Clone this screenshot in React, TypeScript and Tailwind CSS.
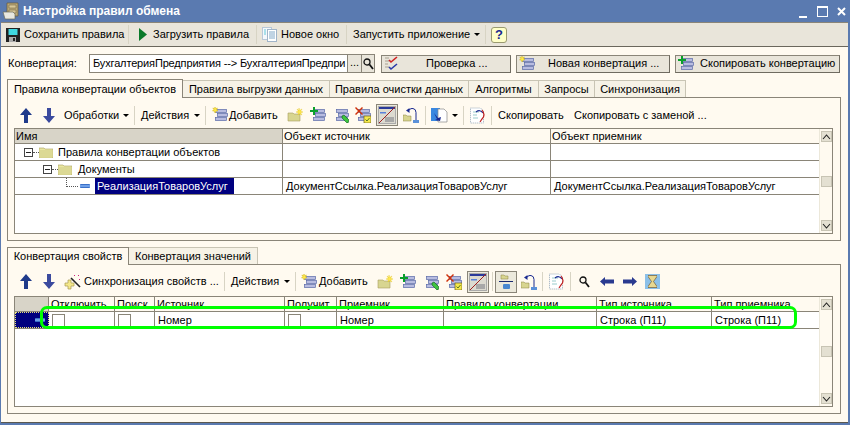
import React from "react";

const Stack = ({ children }: { children?: React.ReactNode }) => (
  <svg width="16" height="16" viewBox="0 0 16 16" className="block shrink-0">
    <rect x="3.500" y="2.500" width="11" height="3" fill="#b8bce0" stroke="#5a6aa8" strokeWidth="0.7" />
    <rect x="5.500" y="6.500" width="10" height="3" fill="#b8bce0" stroke="#5a6aa8" strokeWidth="0.7" />
    <rect x="3.500" y="10.500" width="11" height="3" fill="#b8bce0" stroke="#5a6aa8" strokeWidth="0.7" />
    {children}
  </svg>
);
const Star = () => <path d="M3 0l.8 1.600L5.500 1 4.700 2.600 6 4 4.200 4 3 6 2.200 4 .5 4l1.300-1.400L.8 1l1.500.6z" fill="#ffe94a" stroke="#c8a800" strokeWidth="0.4" />;
const Plus = () => <path d="M3 0h2v3h3v2H5v3H3V5H0V3h3z" fill="#0aa02a" />;
const Pencil = () => <path d="M9 9l2-1 5 5-1 3-1 0-5-5z" fill="#3ec43e" stroke="#0a5a20" strokeWidth="0.6" />;
const Cross = () => <path d="M0 1l1-1 3 3 3-3 1 1-3 3 3 3-1 1-3-3-3 3-1-1 3-3z" fill="#d0300a" />;
const Folder = () => (
  <svg width="14" height="11" viewBox="0 0 14 11" className="shrink-0">
    <path d="M0 1h5l1 1h8v9H0z" fill="#e8e6a0" stroke="#a8a060" strokeWidth="0.6" />
    <rect x="1" y="3" width="12" height="7.500" fill="#dcd994" />
  </svg>
);
const ArrowUp = () => (
  <svg width="12" height="15" viewBox="0 0 12 15" className="shrink-0"><path d="M6 0l6 7H8v8H4V7H0z" fill="#1f3a8a" /></svg>
);
const ArrowDown = () => (
  <svg width="12" height="15" viewBox="0 0 12 15" className="block shrink-0"><path d="M4 0h4v8h4l-6 7-6-7h4z" fill="#3b4a9e" /></svg>
);
const Caret = () => <span className="ml-[4px] h-0 w-0 shrink-0 border-x-[3px] border-t-[3px] border-x-transparent border-t-black" />;
const Sep = ({ c }: { c: string }) => <span className={`h-[19px] w-px shrink-0 bg-[#d8d4c4] ${c}`} />;
const FolderStar = () => (
  <svg width="16" height="16" viewBox="0 0 16 16" className="block shrink-0">
    <path d="M1 6h5l1 1 6 0v7H1z" fill="#d8d590" stroke="#a8a060" strokeWidth="0.6" />
    <path d="M12 1l.6 2.400L15 2l-1.400 2.300L16 5l-2.400.8L15 8l-2.400-1.200L11 8l.4-2.300L9 5l2.400-.7L10 2l1.700 1.300z" fill="#ffe94a" stroke="#d8b800" strokeWidth="0.3" />
  </svg>
);
const StackPlus = () => <Stack><Plus /></Stack>;
const StackStar = () => <Stack><Star /></Stack>;
const StackPencil = () => <Stack><Pencil /></Stack>;
const StackCross = () => (
  <Stack>
    <Cross />
    <rect x="9" y="9" width="7" height="7" fill="#f4e84a" stroke="#6a6020" strokeWidth="0.7" />
    <path d="M10.500 12.500l1.500 1.500 2.500-3" stroke="#4a6a20" fill="none" strokeWidth="0.9" />
  </Stack>
);
const Pressed = ({ c, children }: { c: string; children: React.ReactNode }) => (
  <span className={`flex h-[22px] w-[22px] shrink-0 items-center justify-center border border-[#8a8578] bg-[#ece9dc] ${c}`}>{children}</span>
);
const FormSlash = () => (
  <svg width="18" height="18" viewBox="0 0 18 18">
    <rect x="0.500" y="0.500" width="17" height="17" fill="#dcdad0" stroke="#aaa" />
    <rect x="1" y="1" width="16" height="2" fill="#2a3a9a" />
    <rect x="2" y="6" width="6" height="1.500" fill="#5a80d8" />
    <rect x="7" y="11" width="9" height="5" fill="#a8a8a8" />
    <path d="M1 17L17 1" stroke="#a02020" strokeWidth="1" />
  </svg>
);
const FolderReturn = () => (
  <svg width="16" height="16" viewBox="0 0 16 16" className="block shrink-0">
    <path d="M0 8h3l1 1h4v5H0z" fill="#d8d590" stroke="#8a8040" strokeWidth="0.5" />
    <path d="M6 3q2-2 4-1.500 3 .5 3 4v8" fill="none" stroke="#1a2a90" strokeWidth="1" />
    <path d="M3 3.500l3.500-2.500v5z" fill="#1a2a90" />
    <rect x="10" y="13" width="6" height="3" fill="#5a90d8" />
  </svg>
);
const Refresh = () => (
  <svg width="16" height="17" viewBox="0 0 16 17" className="block shrink-0">
    <path d="M.5 1h10l3 3v12H.5z" fill="#fff" stroke="#9ab" strokeDasharray="1 1" />
    <path d="M3 5h6M3 8h4M3 11h5" stroke="#9cc" />
    <path d="M6 5q4-3 7 1" fill="none" stroke="#1a2a90" strokeWidth="1.200" />
    <path d="M12 3q4 5 0 9l-2 3" fill="none" stroke="#c02020" strokeWidth="1.200" />
  </svg>
);
const Search = () => (
  <svg width="11" height="12" viewBox="0 0 11 12" className="block shrink-0">
    <circle cx="4" cy="4" r="3" fill="none" stroke="#111" strokeWidth="1.300" />
    <path d="M6.500 6.500L10 11" stroke="#111" strokeWidth="1.800" />
  </svg>
);
const Marker = () => <span className="block h-[4px] w-[10px] shrink-0 rounded-[1px] border-y border-[#3a70c8] bg-[#6fa0e8]" />;
const CheckBox = () => <span className="block h-[13px] w-[13px] shrink-0 border border-[#8a8578] bg-white" />;
const Expander = () => (
  <span className="flex h-[9px] w-[9px] shrink-0 items-center justify-center border border-[#444]"><span className="h-px w-[5px] bg-[#222]" /></span>
);

const Btn = ({ c, children }: { c: string; children: React.ReactNode }) => (
  <div className={`flex h-[18px] shrink-0 items-center whitespace-nowrap border border-[#8a8578] border-b-[#6f6b60] border-r-[#6f6b60] bg-[#e9e5da] ${c}`}>{children}</div>
);

function Cell({ c, children }: { c: string; children?: React.ReactNode }) {
  return <div className={`flex shrink-0 items-center overflow-hidden whitespace-nowrap border-r border-[#8a8578] ${c}`}>{children}</div>;
}

const ScrollBtn = ({ up }: { up?: boolean }) => (
  <div className="flex h-[11px] w-[11px] items-center justify-center border border-[#c8c4b4] bg-[#e4e0d2]">
    <svg width="9" height="6" viewBox="0 0 9 6"><path d={up ? "M1 5l3.500-4L8 5" : "M1 1l3.500 4L8 1"} fill="none" stroke="#222" strokeWidth="1.100" /></svg>
  </div>
);
const Scroll = () => (
  <div className="flex w-[13px] shrink-0 flex-col items-center justify-between border-l border-[#ece8da] bg-[#fffaf0] py-[2px]">
    <ScrollBtn up />
    <div className="h-[11px] w-[11px] border border-[#c8c4b4] bg-[#e4e0d2]" />
    <ScrollBtn />
  </div>
);

export default function App() {
  return (
    <div className="relative flex h-[425px] w-[850px] flex-col overflow-hidden whitespace-nowrap bg-[#5a7ab0] text-[11px] text-black" style={{ fontFamily: '"Liberation Sans", Arial, sans-serif' }}>
      {/* title */}
      <div className="flex h-[22px] shrink-0 items-center pl-[2px] pr-[3px]">
        <svg width="18" height="18" viewBox="0 0 18 18" className="shrink-0">
          <path d="M5 1h11v13H5z" fill="#b8a878" stroke="#6a5a38" strokeWidth="0.7" />
          <path d="M7 3h7v3H7z M7 8h7v3H7z" fill="#d8c898" stroke="#6a5a38" strokeWidth="0.5" />
          <path d="M1 10h10l2 2v5H3z" fill="#e8e8e0" stroke="#6a6a58" strokeWidth="0.7" />
        </svg>
        <span className="ml-[3px] text-[12px] font-bold text-white">Настройка правил обмена</span>
        <div className="ml-auto flex items-center">
          <span className="mt-[12px] h-[2px] w-[8px] bg-white" />
          <span className="ml-[10px] h-[11px] w-[11px] border border-t-2 border-white" />
          <svg width="9" height="9" viewBox="0 0 9 9" className="ml-[9px] mr-[1px]"><path d="M1 1l7 7M8 1L1 8" stroke="#fff" strokeWidth="2" /></svg>
        </div>
      </div>

      {/* main toolbar */}
      <div className="ml-px mr-[2px] flex h-[25px] shrink-0 items-center border-b border-t border-[#6a675c] border-t-[#8a8578] bg-[#e9e5da] pl-[5px]">
        <svg width="14" height="14" viewBox="0 0 14 14" className="shrink-0">
          <path d="M0 0h14v14H0z" fill="#222" />
          <rect x="2.500" y="1" width="9" height="6" fill="#40d8e0" />
          <rect x="3" y="9" width="7" height="5" fill="#aaa" />
          <rect x="7" y="10" width="2" height="3" fill="#222" />
        </svg>
        <span className="ml-[4px] w-[97px]">Сохранить правила</span>
        <Sep c="ml-[7px]" />
        <svg width="8" height="13" viewBox="0 0 8 13" className="ml-[10px] shrink-0"><path d="M0 0l8 6.500L0 13z" fill="#0a7a2a" /></svg>
        <span className="ml-[6px] w-[96px]">Загрузить правила</span>
        <Sep c="ml-[7px]" />
        <svg width="15" height="15" viewBox="0 0 15 15" className="ml-[5px] shrink-0">
          <rect x="0.500" y="0.500" width="9" height="12" fill="#f4f8fc" stroke="#b8c8d8" />
          <rect x="5.500" y="2.500" width="9" height="12" fill="#fff" stroke="#a0b4c8" />
          <path d="M7 5h6M7 7h6M7 9h6M7 11h6" stroke="#80a8c8" />
          <path d="M2 3h2M2 5h2M2 7h2" stroke="#60c8d8" />
        </svg>
        <span className="ml-[4px] w-[58px]">Новое окно</span>
        <Sep c="ml-[7px]" />
        <span className="ml-[6px] w-[117px]">Запустить приложение</span>
        <Caret />
        <Sep c="ml-[5px]" />
        <span className="ml-[5px] flex h-[16px] w-[16px] items-center justify-center rounded-[3px] border border-[#9a9a70] bg-[#ffffc8] text-[13px] font-bold leading-none text-[#1a2a90]">?</span>
      </div>

      {/* content */}
      <div className="ml-px mr-[2px] flex min-h-0 flex-1 flex-col border-b border-[#5a5850] bg-[#fffaf0] px-[6px]">
        {/* conversion row */}
        <div className="mt-[7px] flex h-[19px] shrink-0 items-center">
          <span className="w-[82px] pl-[1px]">Конвертация:</span>
          <div className="flex h-[19px] w-[286px] shrink-0 items-center border border-[#8a8578] bg-white">
            <span className="w-[257px] shrink-0 overflow-hidden pl-[3px] tracking-[-0.15px]">БухгалтерияПредприятия --&gt; БухгалтерияПредпри</span>
            <span className="flex h-full w-[14px] shrink-0 items-center justify-center border-l border-[#8a8578] bg-[#e9e5da] pb-[3px]">...</span>
            <span className="flex h-full w-[13px] shrink-0 items-center justify-center border-l border-[#8a8578] bg-[#e9e5da]"><Search /></span>
          </div>
          <Btn c="ml-[6px] w-[130px]">
            <svg width="16" height="16" viewBox="0 0 16 16" className="ml-[2px] shrink-0">
              <path d="M1 2h4M1 5h4M1 8h3M1 11h4" stroke="#a8a090" />
              <path d="M5 4l2 2 6-5" fill="none" stroke="#d02020" strokeWidth="1.600" />
              <path d="M5 11l2 2 6-5" fill="none" stroke="#2a3aa8" strokeWidth="1.600" />
            </svg>
            <span className="ml-[26px]">Проверка ...</span>
          </Btn>
          <Btn c="ml-[5px] w-[154px]">
            <span className="ml-[2px]"><StackStar /></span>
            <span className="ml-[13px]">Новая конвертация ...</span>
          </Btn>
          <Btn c="ml-[5px] w-[165px]">
            <span className="ml-[2px]"><StackPlus /></span>
            <span className="ml-[6px]">Скопировать конвертацию</span>
          </Btn>
        </div>

        {/* top tabs */}
        <div className="mt-[5px] flex h-[19px] shrink-0 items-end">
          <div className="z-10 -mb-px flex h-[19px] w-[176px] shrink-0 items-center justify-center border border-b-0 border-[#8a8578] bg-[#fffaf0]">Правила конвертации объектов</div>
          <div className="flex h-[17px] w-[147px] shrink-0 items-center justify-center border-r border-t border-[#c8c4b4] bg-[#f6f2e6]">Правила выгрузки данных</div>
          <div className="flex h-[17px] w-[139px] shrink-0 items-center justify-center border-r border-t border-[#c8c4b4] bg-[#f6f2e6]">Правила очистки данных</div>
          <div className="flex h-[17px] w-[70px] shrink-0 items-center justify-center border-r border-t border-[#c8c4b4] bg-[#f6f2e6]">Алгоритмы</div>
          <div className="flex h-[17px] w-[56px] shrink-0 items-center justify-center border-r border-t border-[#c8c4b4] bg-[#f6f2e6]">Запросы</div>
          <div className="flex h-[17px] w-[91px] shrink-0 items-center justify-center border-r border-t border-[#c8c4b4] bg-[#f6f2e6]">Синхронизация</div>
        </div>

        {/* top panel */}
        <div className="flex h-[144px] w-[834px] shrink-0 flex-col border border-[#8a8578] px-[6px]">
          <div className="flex h-[30px] shrink-0 items-center pl-[6px] pt-[4px]">
            <ArrowUp />
            <span className="ml-[11px]"><ArrowDown /></span>
            <span className="ml-[9px] w-[55px]">Обработки</span>
            <Caret />
            <Sep c="ml-[5px]" />
            <span className="ml-[6px] w-[49px]">Действия</span>
            <Caret />
            <Sep c="ml-[5px]" />
            <span className="ml-[6px]"><StackStar /></span>
            <span className="ml-[1px] w-[50px]"><span className="underline">Д</span>обавить</span>
            <span className="ml-[8px]"><FolderStar /></span>
            <span className="ml-[7px]"><StackPlus /></span>
            <span className="ml-[7px]"><StackPencil /></span>
            <span className="ml-[6px]"><StackCross /></span>
            <Pressed c="ml-[5px]"><FormSlash /></Pressed>
            <span className="ml-[5px]"><FolderReturn /></span>
            <Sep c="ml-[6px]" />
            <svg width="17" height="16" viewBox="0 0 17 16" className="ml-[5px] shrink-0">
              <rect x="0" y="1" width="9" height="13" fill="#3a88e0" />
              <path d="M7 2h6l3 3v10H7z" fill="#fff" stroke="#888" strokeWidth="0.7" />
              <path d="M3 6l4 5 3-1-1 4-5-1 2-1z" fill="#1a2a90" />
            </svg>
            <Caret />
            <Sep c="ml-[5px]" />
            <span className="ml-[6px]"><Refresh /></span>
            <Sep c="ml-[5px]" />
            <span className="ml-[6px] w-[66px]">Скопировать</span>
            <span className="ml-[10px]">Скопировать с заменой ...</span>
          </div>
          <div className="flex h-[106px] w-[819px] shrink-0 border border-[#8a8578] bg-white">
            <div className="flex w-[804px] shrink-0 flex-col">
              <div className="flex h-[15px] shrink-0 border-b border-[#8a8578] bg-[#fffaf0]">
                <Cell c="w-[268px] bg-[#d8d4c8] pl-[1px]">Имя</Cell>
                <Cell c="w-[268px] pl-[1px]">Объект источник</Cell>
                <Cell c="w-[268px] border-r-0 pl-[1px]">Объект приемник</Cell>
              </div>
              <div className="flex h-[17px] shrink-0 border-b border-[#8a8578]">
                <Cell c="w-[268px] pl-[9px]">
                  <Expander />
                  <span className="w-[6px] shrink-0 border-t border-dotted border-[#555]" />
                  <Folder />
                  <span className="ml-[5px]">Правила конвертации объектов</span>
                </Cell>
                <Cell c="w-[268px]" /><Cell c="w-[268px] border-r-0" />
              </div>
              <div className="flex h-[17px] shrink-0 border-b border-[#8a8578]">
                <Cell c="w-[268px] pl-[28px]">
                  <Expander />
                  <span className="w-[6px] shrink-0 border-t border-dotted border-[#555]" />
                  <Folder />
                  <span className="ml-[6px]">Документы</span>
                </Cell>
                <Cell c="w-[268px]" /><Cell c="w-[268px] border-r-0" />
              </div>
              <div className="flex h-[17px] shrink-0 border-b border-[#8a8578]">
                <Cell c="w-[268px] pl-[51px]">
                  <span className="mb-[8px] h-[9px] w-[12px] shrink-0 border-b border-l border-dotted border-[#555]" />
                  <span className="ml-[2px]"><Marker /></span>
                  <span className="ml-[5px] flex h-[16px] w-[139px] shrink-0 items-center bg-[#00007f] pl-[2px] text-white">РеализацияТоваровУслуг</span>
                </Cell>
                <Cell c="w-[268px] pl-[3px]">ДокументСсылка.РеализацияТоваровУслуг</Cell>
                <Cell c="w-[268px] border-r-0 pl-[3px]">ДокументСсылка.РеализацияТоваровУслуг</Cell>
              </div>
            </div>
            <Scroll />
          </div>
        </div>

        {/* bottom tabs */}
        <div className="mt-[6px] flex h-[17px] shrink-0 items-end">
          <div className="z-10 -mb-px flex h-[18px] w-[122px] shrink-0 items-center justify-center border border-b-0 border-[#8a8578] bg-[#fffaf0]">Конвертация свойств</div>
          <div className="flex h-[17px] w-[129px] shrink-0 items-center justify-center border-r border-t border-[#c8c4b4] bg-[#f6f2e6]">Конвертация значений</div>
        </div>

        {/* bottom panel */}
        <div className="flex h-[150px] w-[834px] shrink-0 flex-col border border-[#8a8578] px-[6px]">
          <div className="flex h-[31px] shrink-0 items-center pl-[6px] pt-[2px]">
            <ArrowUp />
            <span className="ml-[11px]"><ArrowDown /></span>
            <svg width="17" height="16" viewBox="0 0 17 16" className="ml-[9px] shrink-0">
              <path d="M4 6h3v3h3v3H7v3H4v-3H1V9h3z" fill="#f4e88a" stroke="#a89850" strokeWidth="0.7" />
              <path d="M7 4l9 9" stroke="#222" strokeWidth="1.600" />
              <path d="M10 1h1v1h-1zM14 1h1v1h-1zM15 5h1v1h-1z" fill="#d02080" />
            </svg>
            <span className="ml-[3px] w-[133px]">Синхронизация свойств ...</span>
            <Sep c="ml-[7px]" />
            <span className="ml-[6px] w-[49px]">Действия</span>
            <Caret />
            <Sep c="ml-[5px]" />
            <span className="ml-[5px]"><StackStar /></span>
            <span className="ml-[2px] w-[50px]"><span className="underline">Д</span>обавить</span>
            <span className="ml-[8px]"><FolderStar /></span>
            <span className="ml-[7px]"><StackPlus /></span>
            <span className="ml-[7px]"><StackPencil /></span>
            <span className="ml-[7px]"><StackCross /></span>
            <Pressed c="ml-[5px]"><FormSlash /></Pressed>
            <Sep c="ml-[3px]" />
            <Pressed c="ml-[2px]">
              <svg width="16" height="16" viewBox="0 0 16 16">
                <path d="M3 1h3l1 1h3v3H3z" fill="#d8d590" stroke="#8a8040" strokeWidth="0.5" />
                <path d="M1 7.500h14" stroke="#1a2a70" />
                <rect x="5" y="10" width="7" height="5" rx="1" fill="#4a88d0" />
              </svg>
            </Pressed>
            <span className="ml-[4px]"><FolderReturn /></span>
            <Sep c="ml-[5px]" />
            <span className="ml-[6px]"><Refresh /></span>
            <Sep c="ml-[5px]" />
            <span className="ml-[8px]"><Search /></span>
            <svg width="14" height="9" viewBox="0 0 14 9" className="ml-[10px] shrink-0"><path d="M0 4.500L5 0v2.500h9v4H5V9z" fill="#2a3a90" /></svg>
            <svg width="14" height="9" viewBox="0 0 14 9" className="ml-[9px] shrink-0"><path d="M14 4.500L9 0v2.500H0v4h9V9z" fill="#2a3a90" /></svg>
            <span className="ml-[8px] flex h-[15px] w-[15px] shrink-0 items-center justify-center bg-[#8cc0e8]">
              <svg width="9" height="13" viewBox="0 0 9 13"><path d="M0 .5h9v1L5.500 6.500 9 11.500v1H0v-1L3.500 6.500 0 1.500z" fill="#e8d890" stroke="#6a4a20" strokeWidth="0.6" /></svg>
            </span>
          </div>
          <div className="flex h-[111px] w-[819px] shrink-0 border border-[#8a8578] bg-white">
            <div className="flex w-[804px] shrink-0 flex-col">
              <div className="flex h-[15px] shrink-0 border-b border-[#8a8578] bg-[#fffaf0]">
                <Cell c="w-[34px] bg-[#d8d4c8]" />
                <Cell c="w-[66px] pl-[2px]">Отключить</Cell>
                <Cell c="w-[40px] pl-[2px]">Поиск</Cell>
                <Cell c="w-[130px] pl-[2px]">Источник</Cell>
                <Cell c="w-[52px] pl-[2px]">Получит</Cell>
                <Cell c="w-[107px] pl-[2px]">Приемник</Cell>
                <Cell c="w-[153px] pl-[2px]">Правило конвертации</Cell>
                <Cell c="w-[115px] pl-[2px]">Тип источника</Cell>
                <Cell c="w-[107px] border-r-0 pl-[2px]">Тип приемника</Cell>
              </div>
              <div className="flex h-[17px] shrink-0 border-b border-[#8a8578]">
                <Cell c="w-[34px] justify-end border border-dotted border-[#e8e080] bg-[#00007f] pr-[3px]"><Marker /></Cell>
                <Cell c="w-[66px] pl-[3px]"><CheckBox /></Cell>
                <Cell c="w-[40px] pl-[3px]"><CheckBox /></Cell>
                <Cell c="w-[130px] pl-[3px]">Номер</Cell>
                <Cell c="w-[52px] pl-[3px]"><CheckBox /></Cell>
                <Cell c="w-[107px] pl-[3px]">Номер</Cell>
                <Cell c="w-[153px]" />
                <Cell c="w-[115px] pl-[3px]">Строка (П11)</Cell>
                <Cell c="w-[107px] border-r-0 pl-[3px]">Строка (П11)</Cell>
              </div>
            </div>
            <Scroll />
          </div>
        </div>
      </div>
      <div className="h-[2px] shrink-0" />

      {/* annotation */}
      <div className="pointer-events-none absolute left-[40px] top-[306px] h-[23px] w-[757px] rounded-[7px] border-[3px] border-[#00ff00]" />
    </div>
  );
}
